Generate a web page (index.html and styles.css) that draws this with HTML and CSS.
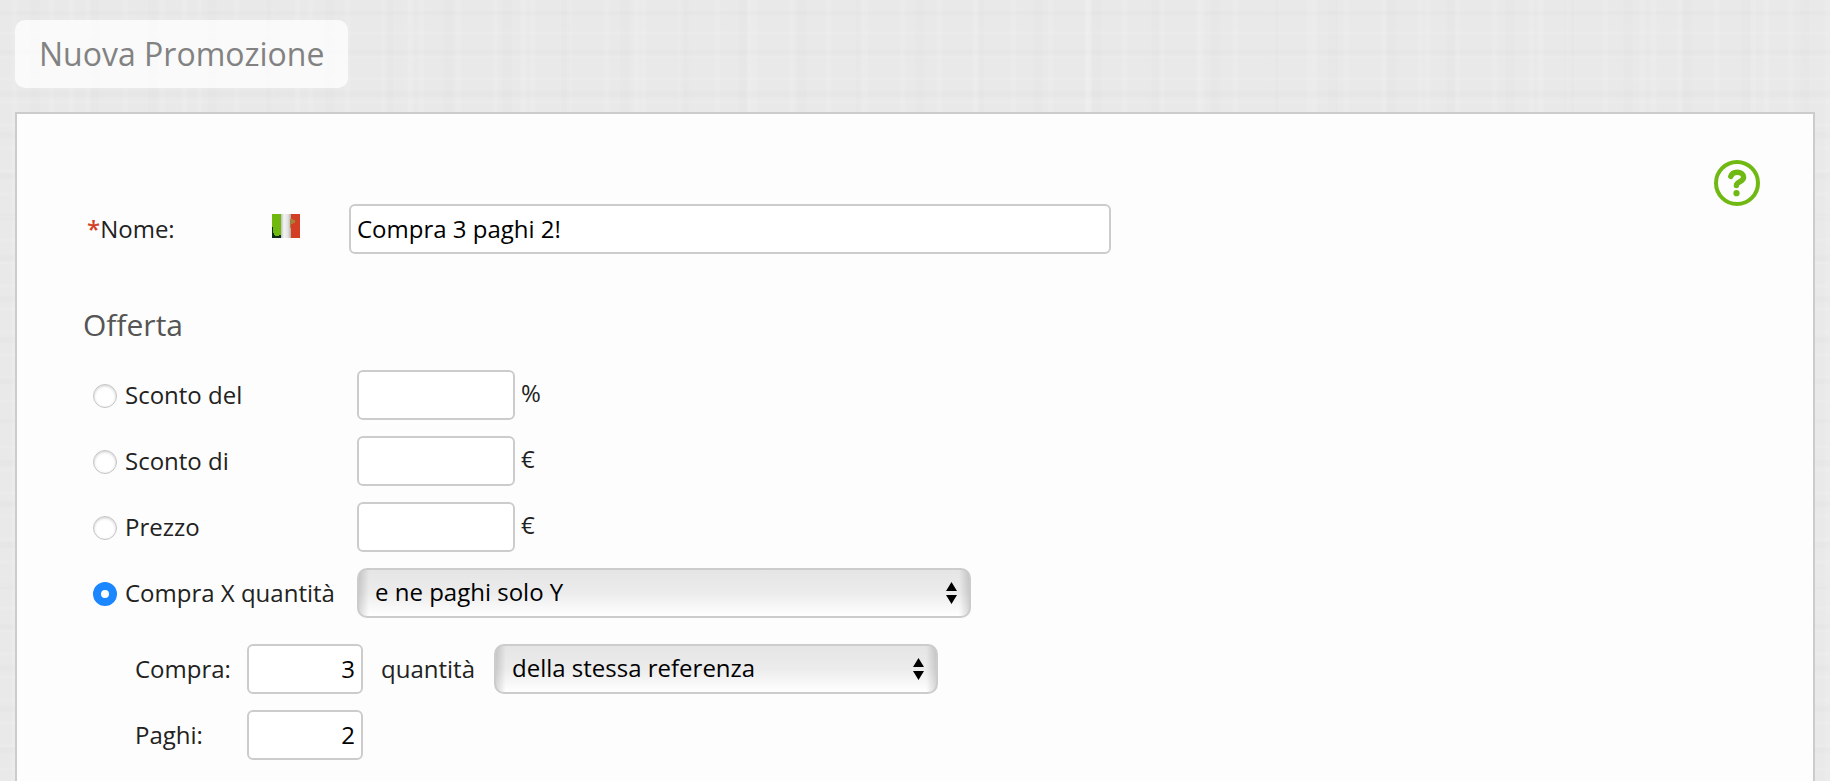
FILE: index.html
```html
<!DOCTYPE html>
<html lang="it">
<head>
    <meta charset="UTF-8">
    <meta name="viewport" content="width=device-width, initial-scale=1.0">
    <title>Nuova Promozione</title>
    <link rel="stylesheet" href="styles.css">
</head>
<body>

    <h1 class="page-title">Nuova Promozione</h1>

    <div class="panel">
        <form class="promo-form">
            <div class="name-row">
                <label for="nome"><span class="required">*</span>Nome:</label>
                <svg class="flag" width="28" height="24" viewBox="0 0 28 24" role="img" aria-label="Italiano">
                    <defs>
                        <linearGradient id="flag-white" x1="0" x2="1" y1="0" y2="0">
                            <stop offset="0" stop-color="#bdbdbd"/>
                            <stop offset="0.3" stop-color="#f4f4f4"/>
                            <stop offset="0.7" stop-color="#e2e2e2"/>
                            <stop offset="1" stop-color="#b4aca0"/>
                        </linearGradient>
                    </defs>
                    <rect width="10" height="24" fill="#70b80e"/>
                    <rect x="18" width="10" height="24" fill="#d23f24"/>
                    <rect x="9" width="10" height="24" fill="url(#flag-white)"/>
                    <path d="M0 13h1v6h1v2h1v1h4v-1h2v3H0z" fill="#0d2b17"/>
                    <path d="M18 5h3v1h2v3h-2v1h-2v4h-1z" fill="#a8803c"/>
                </svg>
                <input type="text" id="nome" class="text-input" value="Compra 3 paghi 2!">
            </div>

            <h2>Offerta</h2>

            <div class="offer-grid">
                <label class="choice"><input type="radio" name="offerta" value="percentuale">Sconto del</label>
                <div class="field">
                    <input type="text" id="percentuale" class="text-input amount" aria-label="Sconto in percentuale">
                    <label class="unit" for="percentuale">%</label>
                </div>

                <label class="choice"><input type="radio" name="offerta" value="importo">Sconto di</label>
                <div class="field">
                    <input type="text" id="importo" class="text-input amount" aria-label="Sconto in euro">
                    <label class="unit" for="importo">€</label>
                </div>

                <label class="choice"><input type="radio" name="offerta" value="prezzo">Prezzo</label>
                <div class="field">
                    <input type="text" id="prezzo" class="text-input amount" aria-label="Prezzo in euro">
                    <label class="unit" for="prezzo">€</label>
                </div>

                <label class="choice"><input type="radio" name="offerta" value="quantita" checked>Compra X quantità</label>
                <div class="field">
                    <select class="select-wide" aria-label="Tipo di offerta">
                        <option>e ne paghi solo Y</option>
                    </select>
                </div>
            </div>

            <div class="quantity-grid">
                <label for="compra">Compra:</label>
                <div class="field">
                    <input type="text" id="compra" class="text-input number" value="3">
                    <label class="between" for="referenza">quantità</label>
                    <select id="referenza" class="select-medium">
                        <option>della stessa referenza</option>
                    </select>
                </div>

                <label for="paghi">Paghi:</label>
                <div class="field">
                    <input type="text" id="paghi" class="text-input number" value="2">
                </div>
            </div>
        </form>

        <button type="button" class="help" aria-label="Aiuto">
            <svg width="46" height="46" viewBox="0 0 46 46" fill="none" stroke="#70b913">
                <circle cx="23" cy="23" r="21" stroke-width="4"/>
                <path d="M16.8 16.4C17.8 13.2 20.5 12.2 23.2 12.2c3.8 0 6.4 1.9 6.4 5 0 4.8-7.2 4.6-7.2 8.4" stroke-width="5.4" stroke-linecap="round"/>
                <circle cx="22.5" cy="33.2" r="3.1" fill="#70b913" stroke="none"/>
            </svg>
        </button>
    </div>

</body>
</html>
```

FILE: styles.css
```css
* {
    box-sizing: border-box;
}

body {
    display: flex;
    flex-direction: column;
    align-items: flex-start;
    min-height: 100vh;
    margin: 0;
    padding: 20px 15px 0;
    font-family: "Open Sans", "Noto Sans", sans-serif;
    font-size: 24px;
    line-height: 32px;
    color: #222;
    /* woven linen texture */
    background-color: #e9e9e9;
    background-image:
        repeating-linear-gradient(90deg, transparent 0 11px, rgba(255, 255, 255, 0.1) 13px 16px, transparent 18px 37px),
        repeating-linear-gradient(90deg, transparent 0 29px, rgba(0, 0, 0, 0.008) 31px 39px, transparent 41px 59px),
        repeating-linear-gradient(90deg, transparent 0 67px, rgba(255, 255, 255, 0.12) 70px 73px, transparent 76px 113px),
        repeating-linear-gradient(0deg, transparent 0 9px, rgba(255, 255, 255, 0.08) 11px 13px, transparent 15px 23px),
        repeating-linear-gradient(0deg, transparent 0 27px, rgba(0, 0, 0, 0.01) 29px 33px, transparent 35px 41px);
}

h1, h2 {
    margin: 0;
    font-weight: normal;
}

.page-title {
    padding: 12px 24px;
    border-radius: 10px;
    background: rgba(255, 255, 255, 0.75);
    font-size: 32px;
    line-height: 44px;
    color: #828282;
}

.panel {
    display: flex;
    flex: 1;
    align-items: flex-start;
    align-self: stretch;
    margin-top: 24px;
    padding: 0 53px 0 66px;
    border: 2px solid #ccc;
    border-bottom: none;
    background: #fdfdfd;
}

.promo-form {
    flex: 1;
    padding-top: 90px;
}

.name-row {
    display: grid;
    grid-template-columns: 185px 77px minmax(0, 762px);
    align-items: center;
    padding-left: 4px;
}

.required {
    color: #d23f24;
    font-weight: 600;
}

.flag {
    margin-bottom: 6px;
}

.text-input,
select {
    height: 50px;
    margin: 0;
    border: 2px solid #ccc;
    font-family: inherit;
    font-size: 24px;
    color: #000;
}

.text-input {
    padding: 0 6px 2px;
    border-radius: 6px;
    background: #fff;
}

h2 {
    margin-top: 50px;
    font-size: 30px;
    line-height: 42px;
    color: #555;
}

.offer-grid,
.quantity-grid {
    display: grid;
    row-gap: 16px;
    align-items: center;
}

.offer-grid {
    grid-template-columns: 264px 1fr;
    margin-top: 24px;
    padding-left: 10px;
}

.quantity-grid {
    grid-template-columns: 112px 1fr;
    margin-top: 26px;
    padding-left: 52px;
}

.choice {
    display: flex;
    align-items: center;
    gap: 8px;
}

.choice input {
    appearance: none;
    width: 24px;
    height: 24px;
    margin: 2px 0 0;
    border: 1px solid #c4c4c4;
    border-radius: 50%;
    background: #fff;
    box-shadow: inset 0 1px 3px rgba(0, 0, 0, 0.2);
}

.choice input:checked {
    border: 8px solid #1a86ff;
    box-shadow: none;
}

.field {
    display: flex;
    align-items: center;
}

.amount {
    width: 158px;
}

.number {
    width: 116px;
    text-align: right;
}

.unit {
    padding: 0 0 4px 6px;
}

.between {
    padding: 0 19px 0 18px;
}

select {
    appearance: none;
    padding: 0 40px 4px 16px;
    border-radius: 10px;
    background:
        url("data:image/svg+xml,%3Csvg xmlns='http://www.w3.org/2000/svg' width='11' height='22'%3E%3Cpath d='M5.5 0L11 9H0zM0 13h11L5.5 22z'/%3E%3C/svg%3E") no-repeat right 12px center,
        linear-gradient(90deg, rgba(0, 0, 0, 0.14), transparent 10px, transparent calc(100% - 10px), rgba(0, 0, 0, 0.14)),
        linear-gradient(#e5e5e5, #ececec 50%, #fff);
}

.select-wide {
    width: 614px;
}

.select-medium {
    width: 444px;
}

.help {
    margin-top: 46px;
    padding: 0;
    border: none;
    background: none;
    cursor: pointer;
}

.help svg {
    display: block;
}
```
